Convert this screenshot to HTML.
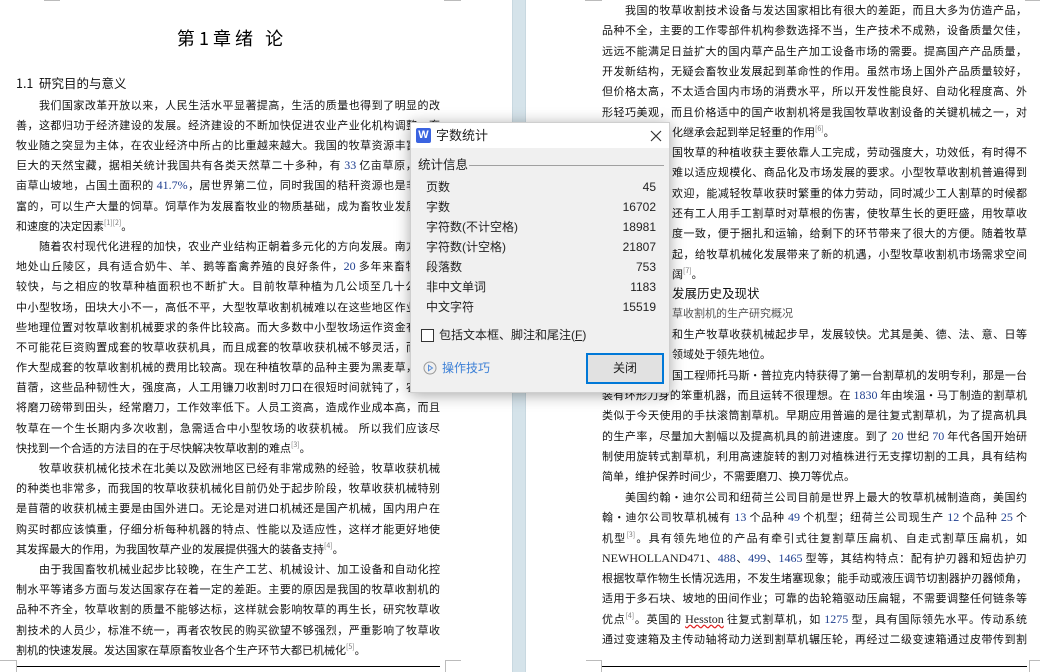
<!DOCTYPE html>
<html><head><meta charset="utf-8">
<style>
*{margin:0;padding:0;box-sizing:border-box}
html,body{width:1040px;height:672px;overflow:hidden;background:#fff;position:relative;font-family:"Liberation Sans","Noto Sans CJK SC",sans-serif}
.gap{position:absolute;left:512px;top:0;width:14px;height:672px;background:#d5e3ea;border-left:1px solid #c8d8e0;border-right:1px solid #c8d8e0}
.l{position:absolute;height:20px;line-height:20px;font-size:11px;color:#111;white-space:nowrap;font-family:"Noto Sans CJK SC",sans-serif}
.j{text-align:justify;text-align-last:justify;white-space:normal;overflow:hidden}
.L{left:16px;width:424px}
.R{left:602px;width:425px}
.RV{left:672px;width:355px}
.n{font-family:"Liberation Serif",serif;color:#1f3f8f;font-size:12px}
sup{font-size:7px;color:#777;vertical-align:5px;line-height:0}
.mk{position:absolute;background:#bbb}
.dlg{position:absolute;left:410px;top:122px;width:260px;height:271px;background:#f0f0f0;box-shadow:0 2px 14px rgba(0,0,0,.35);border:1px solid #cfcfcf;font-family:"Liberation Sans","Noto Sans CJK SC",sans-serif;font-size:12px;color:#222}
.tb{position:absolute;left:0;top:0;width:100%;height:25px;background:#fff}
.row{position:absolute;left:15px;width:230px;height:20px;line-height:20px}
.row b{font-weight:normal;position:absolute;right:0;top:0}
</style></head><body>
<div class="gap"></div>
<div class="mk" style="left:44px;top:0;width:16px;height:1px"></div>
<div class="mk" style="left:444px;top:0;width:17px;height:1px"></div>
<div class="mk" style="left:585px;top:0;width:17px;height:1px"></div>
<div class="mk" style="left:1025px;top:0;width:15px;height:1px"></div>

<!-- left page -->
<div class="l" style="left:160px;top:25px;width:140px;height:26px;line-height:26px;font-size:18px;text-align:center;color:#000">第 1 章 绪&nbsp;&nbsp;&nbsp;论</div>
<div class="l" style="left:16px;top:73px;font-size:12.5px">1.1&nbsp;&nbsp;研究目的与意义</div>
<div class="l L j" style="top:95px">　　我们国家改革开放以来，人民生活水平显著提高，生活的质量也得到了明显的改</div>
<div class="l L j" style="top:115px">善，这都归功于经济建设的发展。经济建设的不断加快促进农业产业化机构调整，畜</div>
<div class="l L j" style="top:135px">牧业随之突显为主体，在农业经济中所占的比重越来越大。我国的牧草资源丰富，是</div>
<div class="l L j" style="top:155px">巨大的天然宝藏，据相关统计我国共有各类天然草二十多种，有 <span class="n">33</span> 亿亩草原，近亿</div>
<div class="l L j" style="top:175px">亩草山坡地，占国土面积的 <span class="n">41.7%</span>，居世界第二位，同时我国的秸秆资源也是非常丰</div>
<div class="l L j" style="top:196px">富的，可以生产大量的饲草。饲草作为发展畜牧业的物质基础，成为畜牧业发展规模</div>
<div class="l L" style="top:216px">和速度的决定因素<sup>[1][2]</sup>。</div>
<div class="l L j" style="top:236px">　　随着农村现代化进程的加快，农业产业结构正朝着多元化的方向发展。南方大部</div>
<div class="l L j" style="top:256px">地处山丘陵区，具有适合奶牛、羊、鹅等畜禽养殖的良好条件，<span class="n">20</span> 多年来畜牧业发</div>
<div class="l L j" style="top:276px">较快，与之相应的牧草种植面积也不断扩大。目前牧草种植为几公顷至几十公顷不</div>
<div class="l L j" style="top:297px">中小型牧场，田块大小不一，高低不平，大型牧草收割机械难以在这些地区作业，这</div>
<div class="l L j" style="top:317px">些地理位置对牧草收割机械要求的条件比较高。而大多数中小型牧场运作资金有限，</div>
<div class="l L j" style="top:337px">不可能花巨资购置成套的牧草收获机具，而且成套的牧草收获机械不够灵活，而且操</div>
<div class="l L j" style="top:357px">作大型成套的牧草收割机械的费用比较高。现在种植牧草的品种主要为黑麦草，紫花</div>
<div class="l L j" style="top:377px">苜蓿，这些品种韧性大，强度高，人工用镰刀收割时刀口在很短时间就钝了，农民需</div>
<div class="l L j" style="top:397px">将磨刀磅带到田头，经常磨刀，工作效率低下。人员工资高，造成作业成本高，而且</div>
<div class="l L j" style="top:418px">牧草在一个生长期内多次收割，急需适合中小型牧场的收获机械。 所以我们应该尽</div>
<div class="l L" style="top:438px">快找到一个合适的方法目的在于尽快解决牧草收割的难点<sup>[3]</sup>。</div>
<div class="l L j" style="top:458px">　　牧草收获机械化技术在北美以及欧洲地区已经有非常成熟的经验，牧草收获机械</div>
<div class="l L j" style="top:478px">的种类也非常多，而我国的牧草收获机械化目前仍处于起步阶段，牧草收获机械特别</div>
<div class="l L j" style="top:498px">是苜蓿的收获机械主要是由国外进口。无论是对进口机械还是国产机械，国内用户在</div>
<div class="l L j" style="top:519px">购买时都应该慎重，仔细分析每种机器的特点、性能以及适应性，这样才能更好地使</div>
<div class="l L" style="top:539px">其发挥最大的作用，为我国牧草产业的发展提供强大的装备支持<sup>[4]</sup>。</div>
<div class="l L j" style="top:559px">　　由于我国畜牧机械业起步比较晚，在生产工艺、机械设计、加工设备和自动化控</div>
<div class="l L j" style="top:579px">制水平等诸多方面与发达国家存在着一定的差距。主要的原因是我国的牧草收割机的</div>
<div class="l L j" style="top:599px">品种不齐全，牧草收割的质量不能够达标，这样就会影响牧草的再生长，研究牧草收</div>
<div class="l L j" style="top:620px">割技术的人员少，标准不统一，再者农牧民的购买欲望不够强烈，严重影响了牧草收</div>
<div class="l L" style="top:640px">割机的快速发展。发达国家在草原畜牧业各个生产环节大都已机械化<sup>[5]</sup>。</div>
<div class="mk" style="left:0;top:660px;width:16px;height:1px"></div>
<div class="mk" style="left:16px;top:660px;width:1px;height:12px"></div>
<div class="mk" style="left:445px;top:660px;width:1px;height:12px"></div>
<div class="mk" style="left:445px;top:660px;width:16px;height:1px"></div>
<div style="position:absolute;left:17px;top:666px;width:423px;height:1px;background:#000"></div>

<!-- right page -->
<div class="l R j" style="top:0px">　　我国的牧草收割技术设备与发达国家相比有很大的差距，而且大多为仿造产品，</div>
<div class="l R j" style="top:20px">品种不全，主要的工作零部件机构参数选择不当，生产技术不成熟，设备质量欠佳，</div>
<div class="l R j" style="top:41px">远远不能满足日益扩大的国内草产品生产加工设备市场的需要。提高国产产品质量，</div>
<div class="l R j" style="top:61px">开发新结构，无疑会畜牧业发展起到革命性的作用。虽然市场上国外产品质量较好，</div>
<div class="l R j" style="top:81px">但价格太高，不太适合国内市场的消费水平，所以开发性能良好、自动化程度高、外</div>
<div class="l R j" style="top:102px">形轻巧美观，而且价格适中的国产收割机将是我国牧草收割设备的关键机械之一，对</div>
<div class="l RV" style="top:122px">化继承会起到举足轻重的作用<sup>[6]</sup>。</div>
<div class="l RV j" style="top:142px">国牧草的种植收获主要依靠人工完成，劳动强度大，功效低，有时得不</div>
<div class="l RV j" style="top:162px">难以适应规模化、商品化及市场发展的要求。小型牧草收割机普遍得到</div>
<div class="l RV j" style="top:183px">欢迎，能减轻牧草收获时繁重的体力劳动，同时减少工人割草的时候都</div>
<div class="l RV j" style="top:203px">还有工人用手工割草时对草根的伤害，使牧草生长的更旺盛，用牧草收</div>
<div class="l RV j" style="top:223px">度一致，便于捆扎和运输，给剩下的环节带来了很大的方便。随着牧草</div>
<div class="l RV j" style="top:244px">起，给牧草机械化发展带来了新的机遇，小型牧草收割机市场需求空间</div>
<div class="l RV" style="top:264px">阔<sup>[7]</sup>。</div>
<div class="l RV" style="top:283px;font-size:12.5px">发展历史及现状</div>
<div class="l RV" style="top:303px;color:#555">草收割机的生产研究概况</div>
<div class="l RV j" style="top:324px">和生产牧草收获机械起步早，发展较快。尤其是美、德、法、意、日等</div>
<div class="l RV" style="top:344px">领域处于领先地位。</div>
<div class="l RV j" style="top:365px">国工程师托马斯·普拉克内特获得了第一台割草机的发明专利，那是一台</div>
<div class="l R j" style="top:385px">装有环形刀身的笨重机器，而且运转不很理想。在 <span class="n">1830</span> 年由埃温·马丁制造的割草机</div>
<div class="l R j" style="top:405px">类似于今天使用的手扶滚筒割草机。早期应用普遍的是往复式割草机，为了提高机具</div>
<div class="l R j" style="top:426px">的生产率，尽量加大割幅以及提高机具的前进速度。到了 <span class="n">20</span> 世纪 <span class="n">70</span> 年代各国开始研</div>
<div class="l R j" style="top:446px">制使用旋转式割草机，利用高速旋转的割刀对植株进行无支撑切割的工具，具有结构</div>
<div class="l R" style="top:466px">简单，维护保养时间少，不需要磨刀、换刀等优点。</div>
<div class="l R j" style="top:487px">　　美国约翰·迪尔公司和纽荷兰公司目前是世界上最大的牧草机械制造商，美国约</div>
<div class="l R j" style="top:507px">翰·迪尔公司牧草机械有 <span class="n">13</span> 个品种 <span class="n">49</span> 个机型；纽荷兰公司现生产 <span class="n">12</span> 个品种 <span class="n">25</span> 个</div>
<div class="l R j" style="top:528px">机型<sup>[3]</sup>。具有领先地位的产品有牵引式往复割草压扁机、自走式割草压扁机，如</div>
<div class="l R j" style="top:548px"><span class="n" style="color:#222">NEWHOLLAND471</span>、<span class="n">488</span>、<span class="n">499</span>、<span class="n">1465</span> 型等，其结构特点：配有护刃器和短齿护刃器，</div>
<div class="l R j" style="top:568px">根据牧草作物生长情况选用，不发生堵塞现象；能手动或液压调节切割器护刃器倾角，</div>
<div class="l R j" style="top:588px">适用于多石块、坡地的田间作业；可靠的齿轮箱驱动压扁辊，不需要调整任何链条等</div>
<div class="l R j" style="top:609px">优点<sup>[4]</sup>。英国的 <span class="n" style="color:#222;text-decoration:underline wavy #e02020">Hesston</span> 往复式割草机，如 <span class="n">1275</span> 型，具有国际领先水平。传动系统</div>
<div class="l R j" style="top:629px">通过变速箱及主传动轴将动力送到割草机辗压轮，再经过二级变速箱通过皮带传到割</div>
<div class="mk" style="left:586px;top:660px;width:16px;height:1px"></div>
<div class="mk" style="left:601px;top:660px;width:1px;height:12px"></div>
<div class="mk" style="left:1029px;top:660px;width:1px;height:12px"></div>
<div class="mk" style="left:1029px;top:660px;width:11px;height:1px"></div>
<div style="position:absolute;left:602px;top:666px;width:425px;height:1px;background:#000"></div>

<!-- dialog -->
<div class="dlg">
  <div class="tb">
    <div style="position:absolute;left:5px;top:5px;width:15px;height:15px;background:#3a63e0;border-radius:2px;color:#fff;font-weight:bold;font-size:11px;line-height:15px;text-align:center">W</div>
    <div style="position:absolute;left:25px;top:3px;font-size:13px;line-height:20px">字数统计</div>
    <svg style="position:absolute;left:239px;top:7px" width="12" height="12" viewBox="0 0 12 12"><path d="M1 1L11 11M11 1L1 11" stroke="#333" stroke-width="1.2"/></svg>
  </div>
  <div style="position:absolute;left:7px;top:32px;line-height:20px;font-size:12.5px">统计信息</div>
  <div style="position:absolute;left:58px;top:42px;width:195px;height:1px;background:#a0a0a0"></div>
  <div class="row" style="top:54px">页数<b>45</b></div>
  <div class="row" style="top:74px">字数<b>16702</b></div>
  <div class="row" style="top:94px">字符数(不计空格)<b>18981</b></div>
  <div class="row" style="top:114px">字符数(计空格)<b>21807</b></div>
  <div class="row" style="top:134px">段落数<b>753</b></div>
  <div class="row" style="top:154px">非中文单词<b>1183</b></div>
  <div class="row" style="top:174px">中文字符<b>15519</b></div>
  <div style="position:absolute;left:10px;top:206px;width:13px;height:13px;border:1px solid #333;background:#fff"></div>
  <div style="position:absolute;left:28px;top:202px;line-height:20px">包括文本框、脚注和尾注(<u>F</u>)</div>
  <svg style="position:absolute;left:12px;top:238px" width="14" height="14" viewBox="0 0 14 14"><circle cx="7" cy="7" r="6" fill="none" stroke="#999" stroke-width="1"/><path d="M5.5 4.3L9.5 7L5.5 9.7Z" fill="none" stroke="#5a8fd8" stroke-width="1"/></svg>
  <div style="position:absolute;left:31px;top:235px;line-height:20px;color:#3b7fd6">操作技巧</div>
  <div style="position:absolute;left:175px;top:230px;width:78px;height:31px;border:2px solid #0078d7;background:#e1e1e1;text-align:center;line-height:27px">关闭</div>
</div>
</body></html>
